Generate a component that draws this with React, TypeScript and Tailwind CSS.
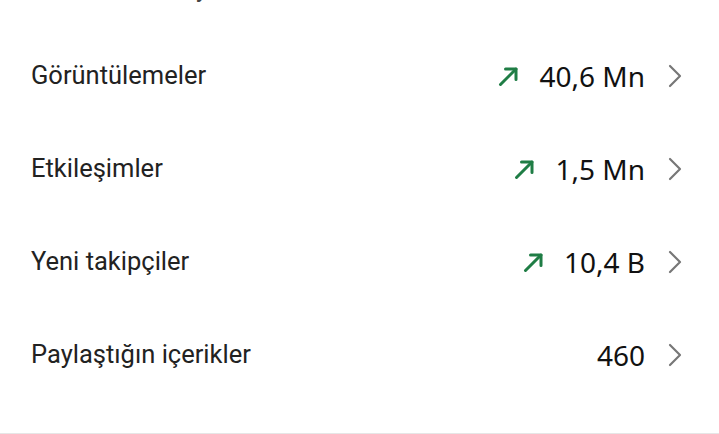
import { ChevronRight } from "lucide-react";

const rows = [
  { label: "Görüntülemeler", value: "40,6 Mn", up: true },
  { label: "Etkileşimler", value: "1,5 Mn", up: true },
  { label: "Yeni takipçiler", value: "10,4 B", up: true },
  { label: "Paylaştığın içerikler", value: "460", up: false },
];

function UpArrow() {
  return (
    <svg width="22" height="22" viewBox="0 0 22 22" fill="none" stroke="#1f7d45" strokeWidth="3" strokeLinecap="round" strokeLinejoin="round">
      <path d="M2.5 19.5 L18 4" />
      <path d="M7.5 4 H18 V14.5" />
    </svg>
  );
}

export default function App() {
  return (
    <div className="w-[719px] h-[434px] bg-white relative overflow-hidden border-b border-[#e6e6e6]" style={{ fontFamily: "Roboto, sans-serif" }}>
      {/* descender of the heading above, cut off */}
      <div className="h-[29px] overflow-hidden">
        <div className="-mt-[26px] pl-[196px] text-[25px] leading-[30px] text-[#444]">y</div>
      </div>
      <div className="flex flex-col">
        {rows.map((r) => (
          <div key={r.label} className="h-[93px] flex items-center pl-[31px] pr-[24px]">
            <span className="flex-1 text-[25.5px] text-[#222]">{r.label}</span>
            <div className="flex items-center">
              {r.up && (
                <span className="mr-[19px] flex items-center">
                  <UpArrow />
                </span>
              )}
              <span className="text-[28px] text-[#111]" style={{ fontFamily: '"Noto Sans", sans-serif' }}>
                {r.value}
              </span>
              <ChevronRight className="ml-[10px] text-[#777]" size={40} strokeWidth={1.3} />
            </div>
          </div>
        ))}
      </div>
    </div>
  );
}
